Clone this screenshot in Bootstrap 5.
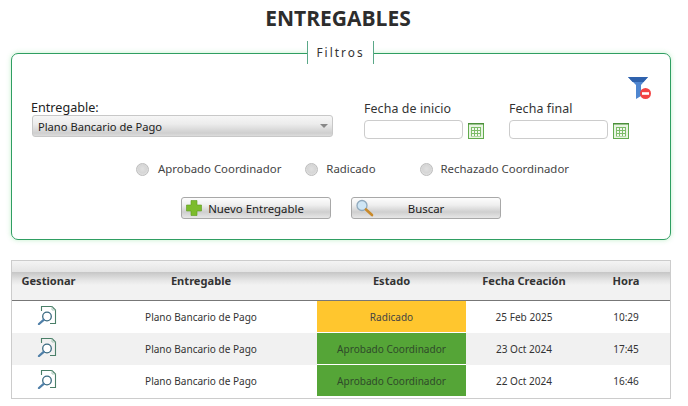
<!DOCTYPE html>
<html lang="es">
<head>
<meta charset="utf-8">
<title>Entregables</title>
<link href="https://cdn.jsdelivr.net/npm/bootstrap@5.3.0/dist/css/bootstrap.min.css" rel="stylesheet">
<style>
html,body{background:#fff}
body{margin:0;font-family:"Noto Sans","Open Sans",sans-serif;font-size:12px;color:#333;width:688px;height:406px;overflow:hidden}
.page-wrap{padding:5px 17px 0 11px}
.page-title{font-family:"Open Sans","Noto Sans",sans-serif;font-size:21px;font-weight:700;line-height:27px;height:27px;margin:0 0 21px;color:#2d2d2d;text-align:center;padding-right:6px}
.filter-box{position:relative;height:187px;border:1px solid #2f9e62;border-radius:7px;box-shadow:0 0 5px rgba(120,220,140,.45);padding:0 19px}
.filter-legend{position:absolute;left:295px;top:-13px;width:67px;height:23px;background:#fff;border-left:1px solid #5aa888;border-right:1px solid #5aa888;font-size:11.8px;letter-spacing:2.05px;line-height:22px;text-align:center;color:#333}
.clear-filter{position:absolute;left:616px;top:22px;width:24px;height:24px}
.filter-row{padding-top:46px;height:99px}
.del-col{width:301px;margin-right:32px;flex:none}
.field-lbl{font-size:12.6px;line-height:16px;color:#222;height:15px;display:block}
.date-lbl{font-size:12.4px;line-height:18px;height:20px;display:block;color:#333;letter-spacing:.1px}
.gel-select{height:22px;width:301px;margin-left:1px;border:1px solid #c8c8c8;border-radius:3px;background:linear-gradient(#f6f6f6 0,#ececec 40%,#cfcfcf 85%,#dcdcdc 100%);font-size:11.15px;line-height:22px;padding-left:5px;color:#222;position:relative}
.gel-select::after{content:"";position:absolute;right:4px;top:8px;border:4.500px solid transparent;border-top:4.500px solid #888;border-bottom:0}
.date-col{width:145px;flex:none}
.date-in{width:99px;height:19px;border:1px solid #ccc;border-radius:4px;background:#fff}
.cal-ico{width:16px;height:16px;margin-left:5px;margin-top:3px;display:block}
.radio-row{height:28px;padding-left:105px;padding-top:4px;align-items:center}
.radio-dot{width:13px;height:13px;border-radius:50%;border:1px solid #bdbdbd;background:radial-gradient(circle at 50% 45%,#e0e0e0 0,#d6d6d6 50%,#efefef 100%);flex:none}
.radio-txt{font-size:11.4px;margin-left:8px;color:#444;white-space:nowrap}
.radio-first{margin-left:9px}
.gap-mid{margin-left:24px}
.gap-wide{margin-left:44px}
.gel-btn-row{margin-top:14px;padding-left:150px;gap:20px;padding-top:2px}
.gel-btn{position:relative;width:150px;height:22px;border:1px solid #a8a8a8;border-radius:3px;background:linear-gradient(#fdfdfd 0,#efefef 35%,#cfcfcf 70%,#e6e6e6 100%);font-size:11.4px;line-height:20px;color:#1a1a1a;padding:1px 0 0;text-align:center}
.gel-btn svg{position:absolute;left:3px;top:1px}
.grid-wrap{margin-top:20px;border:1px solid #ccc;height:139px;overflow:hidden;width:660px}
.data-grid{width:658px;table-layout:fixed;border-collapse:separate;border-spacing:0;margin:0}
.w-a{width:73px}.w-b{width:232px}.w-c{width:149px}.w-d{width:116px}.w-e{width:88px}
.data-grid th{height:40px;font-size:11.1px;font-weight:700;color:#333;text-align:center;vertical-align:top;padding:12px 0 0;border-bottom:1px solid #777;background:linear-gradient(#f4f4f4 0,#e4e4e4 28%,#c6c6c6 28.5%,#e6e6e6 50%,#f2f2f2 62%,#f2f2f2 100%)}
.data-grid td{height:32px;font-size:10.05px;text-align:center;vertical-align:middle;padding:1px 0 0;color:#333;background:#fff;border:0}
.data-grid tr.alt td{background:#f1f1f1}
.data-grid td.st-y{background:#ffc62e;border-bottom:1px solid #fff;color:#444;padding-top:2px}
.data-grid tr td.st-g{background:#55a537;border-bottom:1px solid #fff;color:#2f4a2a;padding-top:2px}
.doc-ico{width:20px;height:20px;display:block;margin:-3px auto 3px 25px}
</style>
</head>
<body>
<svg width="0" height="0" class="d-block">
  <defs>
    <symbol id="cal" viewBox="0 0 16 16"><rect x=".5" y=".5" width="15" height="15" fill="#e8f4e2" stroke="#62ab4e"/><rect width="16" height="1.500" fill="#4b8f3a"/><rect x="3" y="4" width="10" height="9.500" fill="#7cbc68"/><path d="M4 5h2v2H4zM7 5h2v2H7zM10 5h2v2h-2zM4 8h2v2H4zM7 8h2v2H7zM10 8h2v2h-2zM4 11h2v2H4zM7 11h2v2H7zM10 11h2v2h-2z" fill="#f2f8ee"/></symbol>
    <symbol id="doc" viewBox="0 0 20 20"><path d="M4.500 6V1.500H15L18.500 5V18.500H13" fill="none" stroke="#4a7f68" stroke-width="1.100"/><path d="M15 1.500V5H18.500" fill="none" stroke="#9dbfae" stroke-width=".8"/><circle cx="10" cy="11.500" r="4.300" fill="#fff" stroke="#3a6a80" stroke-width="1.300"/><path d="M6.700 14.800L2 19" stroke="#4f7fa8" stroke-width="2.300" stroke-linecap="round"/></symbol>
  </defs>
</svg>
<div class="page-wrap">
  <h1 class="page-title">ENTREGABLES</h1>

  <div class="filter-box">
    <div class="filter-legend">Filtros</div>
    <svg class="clear-filter" viewBox="0 0 24 24" aria-label="Limpiar filtros">
      <path d="M0 1H20L13 9V20L8 23V9Z" fill="#4f86d0"/>
      <path d="M0 1H20L15.500 6H4.500Z" fill="#2f62ad"/>
      <circle cx="17.500" cy="17.500" r="5.500" fill="#f34343"/>
      <rect x="14" y="16.200" width="7" height="2.600" fill="#fff"/>
    </svg>

    <div class="filter-row d-flex">
      <div class="del-col">
        <label class="field-lbl">Entregable:</label>
        <div class="gel-select">Plano Bancario de Pago</div>
      </div>
      <div class="date-col">
        <label class="date-lbl">Fecha de inicio</label>
        <div class="d-flex">
          <div class="date-in"></div>
          <svg class="cal-ico"><use href="#cal"/></svg>
        </div>
      </div>
      <div class="date-col">
        <label class="date-lbl">Fecha final</label>
        <div class="d-flex">
          <div class="date-in"></div>
          <svg class="cal-ico"><use href="#cal"/></svg>
        </div>
      </div>
    </div>

    <div class="radio-row d-flex">
      <span class="radio-dot"></span><span class="radio-txt radio-first">Aprobado Coordinador</span>
      <span class="radio-dot gap-mid"></span><span class="radio-txt">Radicado</span>
      <span class="radio-dot gap-wide"></span><span class="radio-txt">Rechazado Coordinador</span>
    </div>

    <div class="gel-btn-row d-flex">
      <button type="button" class="gel-btn">
        <svg width="18" height="18" viewBox="0 0 18 18"><path d="M6 1.500h6v4.500h4.500v6H12v4.500H6V12H1.500V6H6z" fill="#7cbc2c" stroke="#5c9a1e" stroke-width=".6"/></svg>Nuevo Entregable</button>
      <button type="button" class="gel-btn">
        <svg width="20" height="18" viewBox="0 0 20 18"><circle cx="7" cy="6.500" r="5" fill="#cfe6f5" stroke="#8fa9bd" stroke-width="1.300"/><path d="M11 10.500l6 5.500" stroke="#c98a2b" stroke-width="2.600" stroke-linecap="round"/></svg>Buscar</button>
    </div>
  </div>

  <div class="grid-wrap">
    <table class="data-grid">
      <colgroup><col class="w-a"><col class="w-b"><col class="w-c"><col class="w-d"><col class="w-e"></colgroup>
      <thead><tr><th>Gestionar</th><th>Entregable</th><th>Estado</th><th>Fecha Creación</th><th>Hora</th></tr></thead>
      <tbody>
        <tr><td><svg class="doc-ico"><use href="#doc"/></svg></td><td>Plano Bancario de Pago</td><td class="st-y">Radicado</td><td>25 Feb 2025</td><td>10:29</td></tr>
        <tr class="alt"><td><svg class="doc-ico"><use href="#doc"/></svg></td><td>Plano Bancario de Pago</td><td class="st-g">Aprobado Coordinador</td><td>23 Oct 2024</td><td>17:45</td></tr>
        <tr><td><svg class="doc-ico"><use href="#doc"/></svg></td><td>Plano Bancario de Pago</td><td class="st-g">Aprobado Coordinador</td><td>22 Oct 2024</td><td>16:46</td></tr>
      </tbody>
    </table>
  </div>
</div>
<script src="https://cdn.jsdelivr.net/npm/bootstrap@5.3.0/dist/js/bootstrap.bundle.min.js"></script>
</body>
</html>
